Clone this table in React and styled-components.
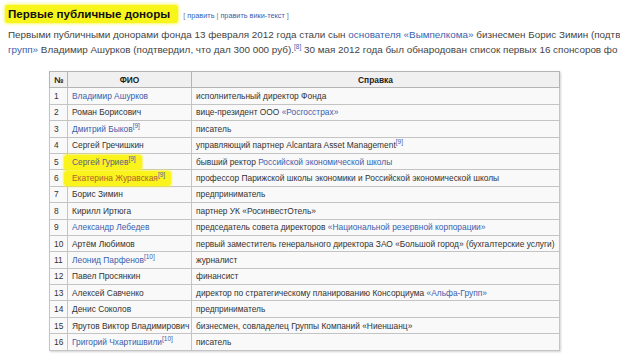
import styled, { createGlobalStyle } from "styled-components";

const GlobalStyle = createGlobalStyle`
  html, body {
    margin: 0;
    padding: 0;
    background: #fff;
  }
  body {
    font-family: "Liberation Sans", Arial, sans-serif;
    color: #333;
  }
`;

const Page = styled.div`
  width: 620px;
  height: 361px;
  overflow: hidden;
  padding: 5px 0 0 8px;
  box-sizing: border-box;
`;

const HeadingRow = styled.div`
  display: flex;
  align-items: baseline;
  gap: 5px;
  height: 17px;
`;

const Heading = styled.h2`
  margin: 0 0 0 -3px;
  font-size: 11.6px;
  font-weight: bold;
  color: #111;
  background: #f8f51a;
  padding: 2px 8px 3px 3px;
  border-radius: 3px;
  box-shadow: 0 0 3px 1px rgba(248, 245, 26, 0.7);
`;

const EditLinks = styled.span`
  font-size: 7.3px;
  color: #777;
`;

const Link = styled.a`
  color: #3a5fae;
  text-decoration: none;
`;

const Para = styled.div`
  margin-top: 5px;
  font-size: 9.9px;
  line-height: 15px;
  white-space: nowrap;
  color: #444;
`;

const Sup = styled.sup`
  font-size: 6.5px;
  line-height: 0;
  color: #3a5fae;
  vertical-align: 4px;
`;

const Table = styled.table`
  margin: 14px 0 0 41px;
  width: 511px;
  border-collapse: collapse;
  font-size: 8.4px;
  color: #333;
  background: #f9f9f9;
  box-shadow: 1px 1px 2px rgba(0, 0, 0, 0.18);
  table-layout: fixed;
`;

const Th = styled.th`
  background: #f0f0f0;
  border: 1px solid #b4b4b4;
  height: 15.4px;
  padding: 0 4px;
  font-weight: bold;
  text-align: ${(p) => p.$align || "center"};
  color: #222;
`;

const Td = styled.td`
  border: 1px solid #c4c4c4;
  height: 15.4px;
  padding: 0 4px;
  white-space: nowrap;
  overflow: visible;
`;

const Marker = styled.span`
  background: #faf31c;
  margin-left: -8px;
  padding: 2px 6px 3px 8px;
  border-radius: 3px;
  box-shadow: 0 0 2px 1px rgba(250, 243, 28, 0.7);
  color: ${(p) => p.$color};
`;

const rows = [
  [<Link>Владимир Ашурков</Link>, "исполнительный директор Фонда"],
  ["Роман Борисович", <>вице-президент ООО <Link>«Росгосстрах»</Link></>],
  [<><Link>Дмитрий Быков</Link><Sup>[9]</Sup></>, "писатель"],
  ["Сергей Гречишкин", <>управляющий партнер Alcantara Asset Management<Sup>[9]</Sup></>],
  [
    <Marker $color="#5a5f86">Сергей Гуриев<Sup>[9]</Sup></Marker>,
    <>бывший ректор <Link>Российской экономической школы</Link></>,
  ],
  [
    <Marker $color="#b0622c">Екатерина Журавская<Sup>[9]</Sup></Marker>,
    "профессор Парижской школы экономики и Российской экономической школы",
  ],
  ["Борис Зимин", "предприниматель"],
  ["Кирилл Иртюга", "партнер УК «РосинвестОтель»"],
  [<Link>Александр Лебедев</Link>, <>председатель совета директоров <Link>«Национальной резервной корпорации»</Link></>],
  ["Артём Любимов", "первый заместитель генерального директора ЗАО «Большой город» (бухгалтерские услуги)"],
  [<><Link>Леонид Парфенов</Link><Sup>[10]</Sup></>, "журналист"],
  ["Павел Просянкин", "финансист"],
  ["Алексей Савченко", <>директор по стратегическому планированию Консорциума <Link>«Альфа-Групп»</Link></>],
  ["Денис Соколов", "предприниматель"],
  ["Ярутов Виктор Владимирович", "бизнесмен, совладелец Группы Компаний «Ниеншанц»"],
  [<><Link>Григорий Чхартишвили</Link><Sup>[10]</Sup></>, "писатель"],
];

export default function App() {
  return (
    <>
      <GlobalStyle />
      <Page>
        <HeadingRow>
          <Heading>Первые публичные доноры</Heading>
          <EditLinks>
            [ <Link>править</Link> | <Link>править вики-текст</Link> ]
          </EditLinks>
        </HeadingRow>
        <Para>
          Первыми публичными донорами фонда 13 февраля 2012 года стали сын{" "}
          <Link>основателя</Link> <Link>«Вымпелкома»</Link> бизнесмен Борис Зимин (подтв
          <br />
          <Link>групп»</Link> Владимир Ашурков (подтвердил, что дал 300 000 руб).<Sup>[8]</Sup> 30 мая 2012 года был
          обнародован список первых 16 спонсоров фо
        </Para>
        <Table>
          <colgroup>
            <col style={{ width: 18 }} />
            <col style={{ width: 124 }} />
            <col />
          </colgroup>
          <thead>
            <tr>
              <Th $align="left">№</Th>
              <Th>ФИО</Th>
              <Th>Справка</Th>
            </tr>
          </thead>
          <tbody>
            {rows.map(([name, info], i) => (
              <tr key={i}>
                <Td>{i + 1}</Td>
                <Td>{name}</Td>
                <Td>{info}</Td>
              </tr>
            ))}
          </tbody>
        </Table>
      </Page>
    </>
  );
}
